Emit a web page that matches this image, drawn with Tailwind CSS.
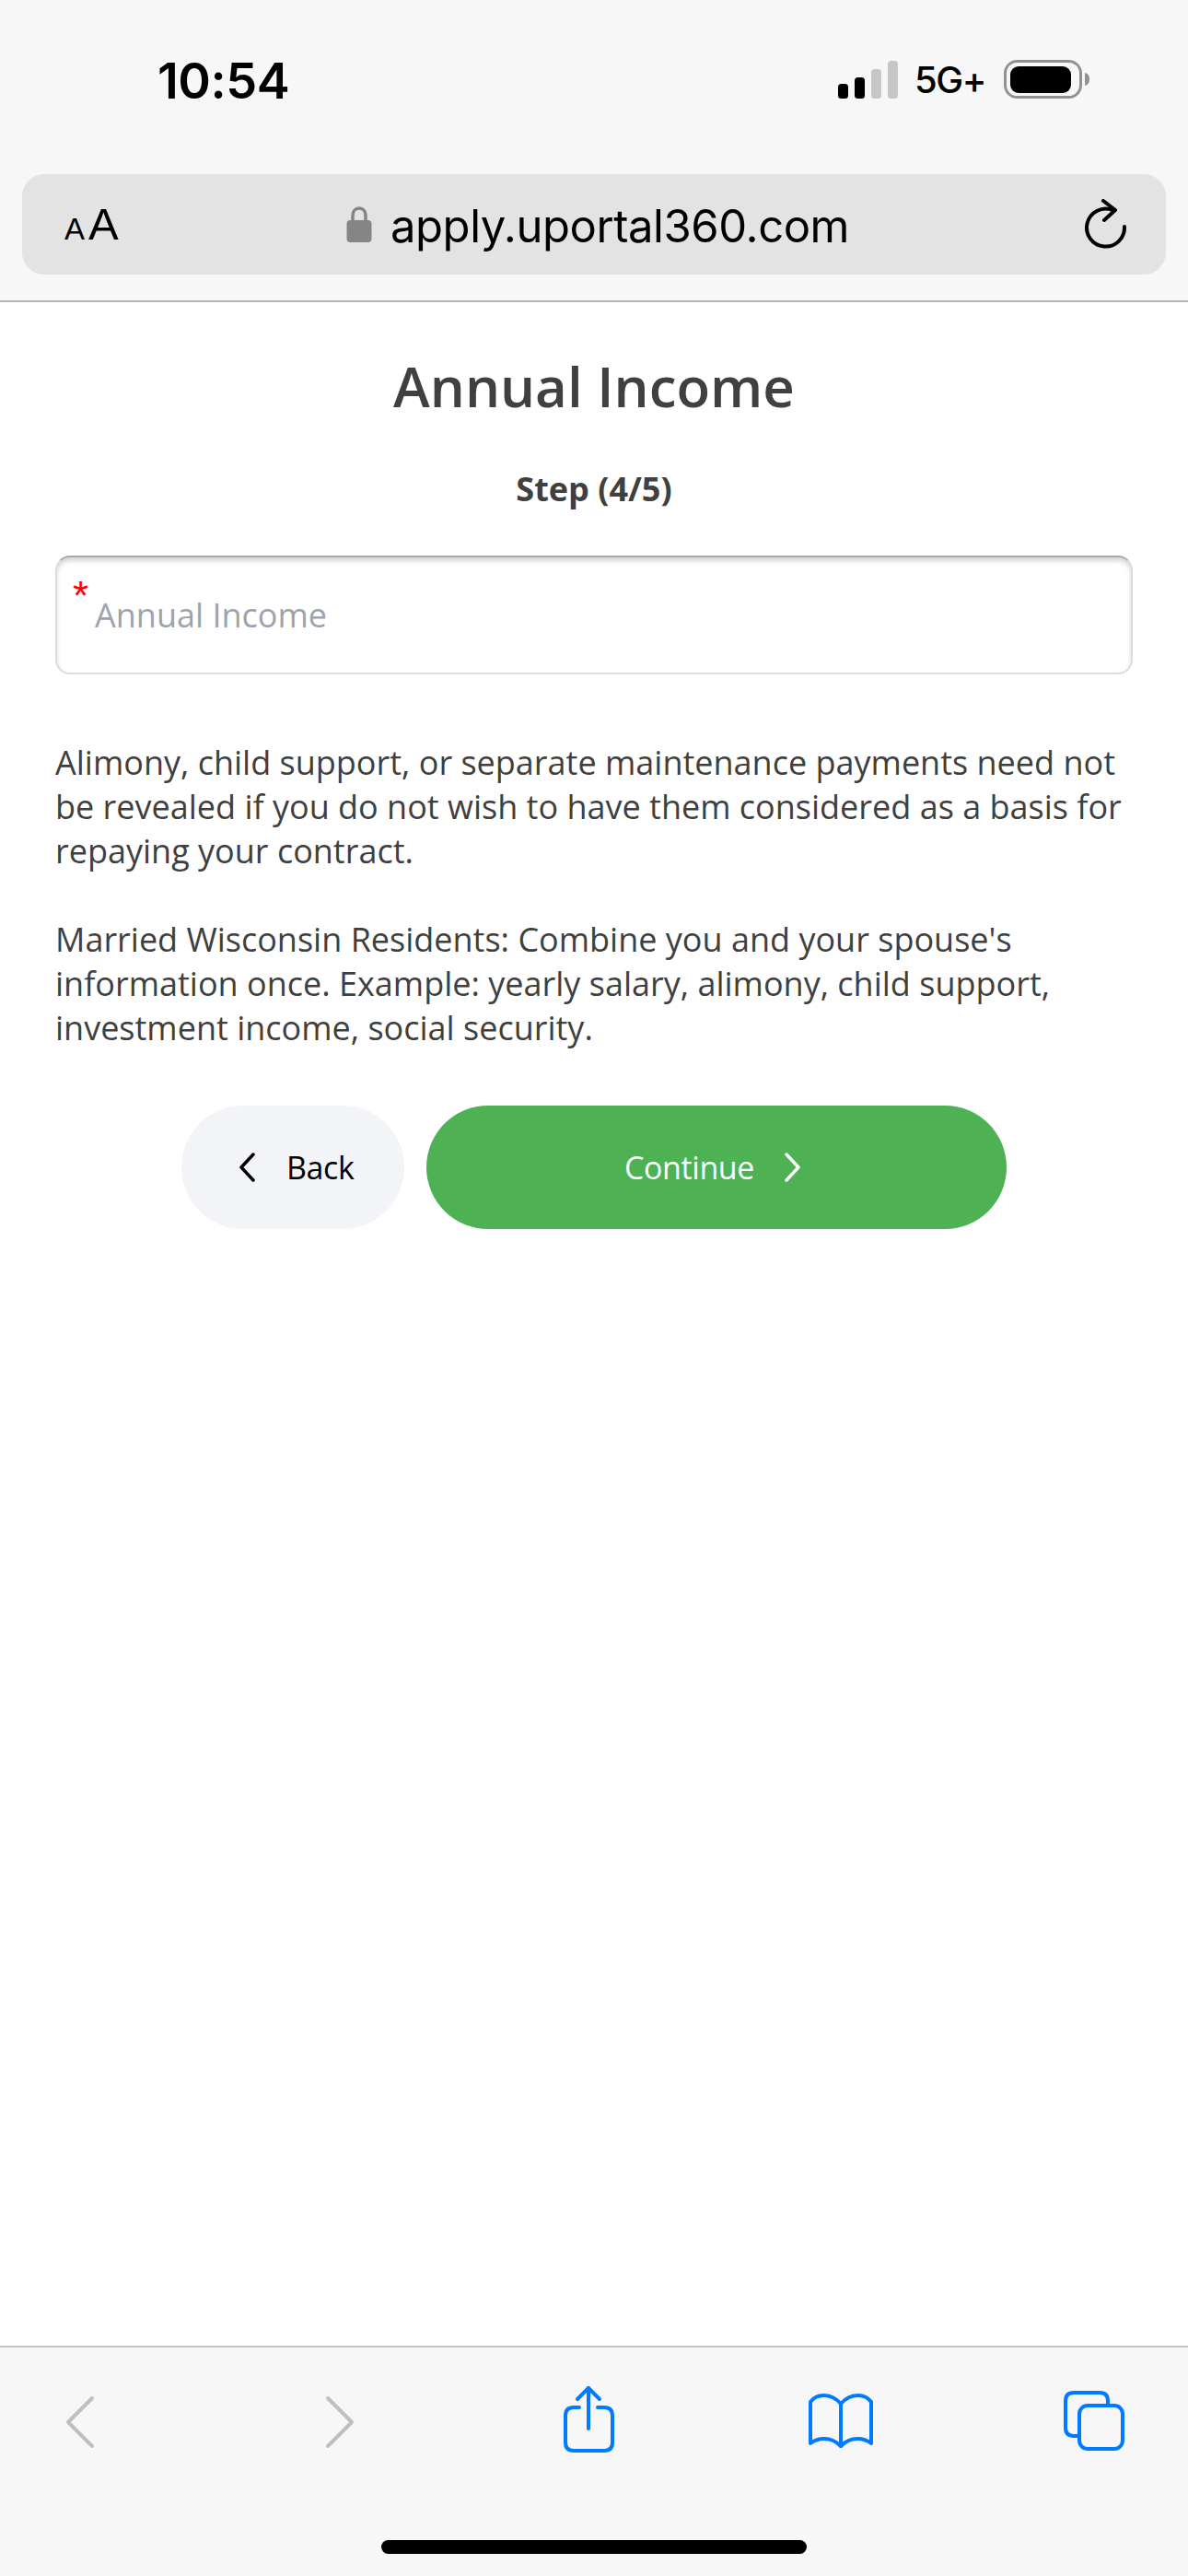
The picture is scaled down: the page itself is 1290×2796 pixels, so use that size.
<!doctype html>
<html lang="en">
<head>
<meta charset="utf-8">
<title>Annual Income</title>
<script src="https://cdn.jsdelivr.net/npm/@tailwindcss/browser@4"></script>
</head>
<body class="m-0 bg-white">
<div class="w-[1290px] h-[2796px] flex flex-col overflow-hidden font-['Open_Sans',sans-serif]">
  <header class="h-[328px] shrink-0 bg-[#f7f7f7] border-b-2 border-[#b4b4b4] px-[24px] flex flex-col">
    <div class="h-[189px] shrink-0 flex items-start font-['Inter',sans-serif] text-black">
      <span class="ml-[147px] mt-[56px] text-[54px] leading-[64px] font-semibold tracking-[-0.5px]">10:54</span>
      <div class="ml-auto mr-[82px] mt-[65px] flex items-start">
        <svg class="mt-px" width="66" height="42" viewBox="0 0 66 42" aria-hidden="true">
          <rect x="0" y="25" width="11" height="16" rx="3.5" fill="#000"/>
          <rect x="18" y="18" width="11" height="23" rx="3.5" fill="#000"/>
          <rect x="36" y="9" width="11" height="32" rx="3.5" fill="#c6c6c6"/>
          <rect x="54" y="0" width="11" height="41" rx="3.5" fill="#c6c6c6"/>
        </svg>
        <span class="ml-[17px] mt-[1px] text-[40px] leading-[42px] font-medium tracking-[-1.5px] w-[77px] whitespace-nowrap">5G+</span>
        <svg class="ml-[20px]" width="94" height="43" viewBox="0 0 94 43" aria-hidden="true">
          <rect x="1.5" y="1.5" width="82" height="39" rx="13" fill="none" stroke="#929292" stroke-width="3"/>
          <rect x="7" y="7" width="66" height="29" rx="9" fill="#000"/>
          <path d="M88 14 C92 15 93 18 93 21 C93 24 92 27 88 28 Z" fill="#929292"/>
        </svg>
      </div>
    </div>
    <div class="h-[109px] shrink-0 rounded-[24px] bg-[#e3e3e3] relative flex items-center text-black font-['Liberation_Sans',sans-serif]">
      <span class="ml-[46px] flex items-baseline leading-none gap-[4px]"><span class="text-[33px]">A</span><span class="text-[49px]">A</span></span>
      <div class="absolute left-[352px] top-[35px] flex items-start">
        <svg width="28" height="39" viewBox="0 0 28 39" aria-hidden="true">
          <path d="M7 18 V10 C7 5 10 2 14 2 C18 2 21 5 21 10 V18" fill="none" stroke="#858585" stroke-width="3.5"/>
          <rect x="0.5" y="15" width="27" height="24" rx="4" fill="#858585"/>
        </svg>
        <span class="ml-[20px] -mt-[8px] text-[49px] leading-[60px] font-['Inter',sans-serif] tracking-[-0.45px]">apply.uportal360.com</span>
      </div>
      <svg class="ml-auto mr-[42px]" width="46" height="56" viewBox="0 0 46 56" fill="none" stroke="#000" stroke-width="4" stroke-linecap="round" stroke-linejoin="round" aria-hidden="true">
        <path d="M30 12 A20.5 20.5 0 1 0 43 30"/>
        <path d="M20 2 L33 12 L21 23"/>
      </svg>
    </div>
  </header>

  <main class="flex-1 px-[60px] text-[#404040]">
    <h1 class="mt-[59px] text-center text-[60px] leading-[64px] font-semibold">Annual Income</h1>
    <p class="mt-[56px] text-center text-[36px] leading-[48px] font-bold">Step (4/5)</p>
    <div class="mt-[48px] h-[129px] rounded-[16px] border-2 border-[#dcdcdc] border-t-[#a8a8a8] shadow-[inset_0_4px_5px_rgba(0,0,0,0.16)] relative">
      <span class="absolute left-[17px] top-[22px] text-[44px] leading-[40px] text-[#ff0000] font-['Liberation_Sans',sans-serif]">*</span>
      <span class="absolute left-[41px] top-[39px] text-[36px] leading-[48px] text-[#9ca3af]">Annual Income</span>
    </div>
    <p class="mt-[72px] text-[36px] leading-[48px] text-[#3f3f3f]">Alimony, child support, or separate maintenance payments need not be revealed if you do not wish to have them considered as a basis for repaying your contract.</p>
    <p class="mt-[48px] text-[36px] leading-[48px] text-[#3f3f3f]">Married Wisconsin Residents: Combine you and your spouse's information once. Example: yearly salary, alimony, child support, investment income, social security.</p>
    <div class="mt-[60px] ml-[137px] flex gap-[24px]">
      <div class="w-[242px] h-[134px] rounded-full bg-[#f3f4f8] flex items-center text-black text-[34px]">
        <svg class="ml-[62px]" width="19" height="32" viewBox="0 0 19 32" fill="none" stroke="#000" stroke-width="3.5" stroke-linecap="round" stroke-linejoin="round" aria-hidden="true"><path d="M16 2 L3 16 L16 30"/></svg>
        <span class="ml-[33px] tracking-[-0.4px]">Back</span>
      </div>
      <div class="w-[630px] h-[134px] rounded-full bg-[#4eb153] flex items-center text-white text-[34px]">
        <span class="ml-[215px] tracking-[-0.4px]">Continue</span>
        <svg class="ml-[32px]" width="19" height="32" viewBox="0 0 19 32" fill="none" stroke="#fff" stroke-width="3.5" stroke-linecap="round" stroke-linejoin="round" aria-hidden="true"><path d="M3 2 L16 16 L3 30"/></svg>
      </div>
    </div>
  </main>

  <footer class="h-[250px] shrink-0 bg-[#f7f7f7] border-t-2 border-[#c2c2c2] flex flex-col items-center">
    <div class="w-full flex items-start h-[209px]">
      <svg class="ml-[70px] mt-[52px]" width="33" height="58" viewBox="0 0 33 58" fill="none" stroke="#bfbfbf" stroke-width="4" stroke-linecap="round" stroke-linejoin="round" aria-hidden="true"><path d="M30 3 L4 29 L30 55"/></svg>
      <svg class="ml-[250px] mt-[52px]" width="33" height="58" viewBox="0 0 33 58" fill="none" stroke="#bfbfbf" stroke-width="4" stroke-linecap="round" stroke-linejoin="round" aria-hidden="true"><path d="M3 3 L29 29 L3 55"/></svg>
      <svg class="ml-[224px] mt-[41px]" width="58" height="74" viewBox="0 0 58 74" fill="none" stroke="#007aff" stroke-width="4" stroke-linecap="round" stroke-linejoin="round" aria-hidden="true">
        <path d="M19 24 H13 C7 24 4 27 4 33 V62 C4 68 7 71 13 71 H46 C52 71 55 68 55 62 V33 C55 27 52 24 46 24 H39"/>
        <path d="M29 47 V3"/>
        <path d="M17 15 L29 3 L41 15"/>
      </svg>
      <svg class="ml-[208px] mt-[48px]" width="74" height="64" viewBox="0 0 74 64" fill="none" stroke="#007aff" stroke-width="4" stroke-linecap="round" stroke-linejoin="round" aria-hidden="true">
        <path d="M37 13 C31 6 25 4 18 4 C12 4 7 7 4 11 V56 C8 53 13 51 19 51 C26 51 32 54 37 59 C42 54 48 51 55 51 C61 51 66 53 70 56 V11 C67 7 62 4 56 4 C49 4 43 6 37 13 Z"/>
        <path d="M37 13 V59"/>
      </svg>
      <svg class="ml-[203px] mt-[45px]" width="70" height="70" viewBox="0 0 70 70" fill="none" stroke="#007aff" stroke-width="4" stroke-linejoin="round" aria-hidden="true">
        <path d="M19 51 H13 C7 51 4 48 4 42 V13 C4 7 7 4 13 4 H41 C47 4 50 7 50 13 V18"/>
        <rect x="19" y="18" width="47" height="47" rx="9"/>
      </svg>
    </div>
    <div class="w-[462px] h-[15px] rounded-full bg-black"></div>
  </footer>
</div>
</body>
</html>
